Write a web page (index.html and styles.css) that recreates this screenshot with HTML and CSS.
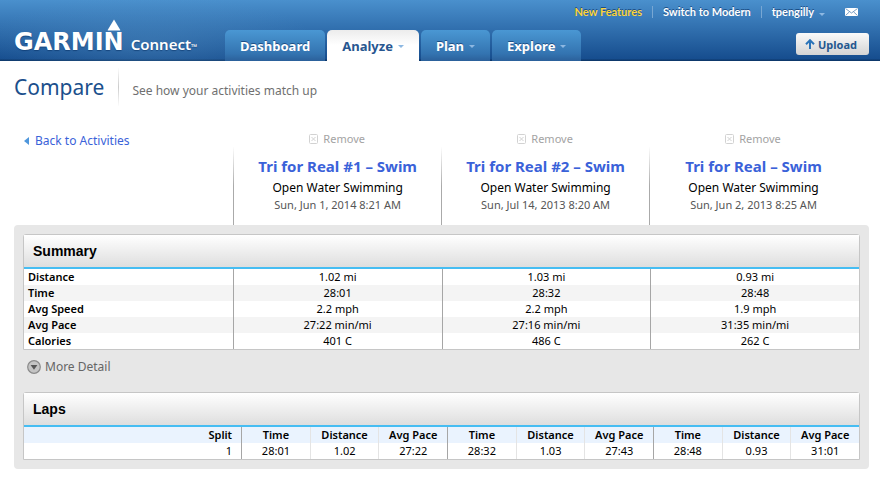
FILE: index.html
```html
<!DOCTYPE html>
<html lang="en">
<head>
    <meta charset="UTF-8">
    <meta name="viewport" content="width=device-width, initial-scale=1.0">
    <title>Garmin Connect - Compare</title>
    <link rel="stylesheet" href="styles.css">
</head>
<body>
    <header class="header">
        <a class="logo" href="#">
            <span class="logo-garmin">GARMI<span class="logo-n">N<svg class="logo-delta" viewBox="0 0 14 12"><path d="M7 0.5 L13.3 11 Q13.3 11.5 12.8 11.5 H1.2 Q0.7 11.5 0.7 11 Z" fill="#fff"/></svg></span></span>
            <span class="logo-connect">Connect<span class="logo-tm">™</span></span>
        </a>

        <nav class="tabs">
            <a class="tab" href="#">Dashboard</a>
            <a class="tab active" href="#">Analyze<span class="caret"></span></a>
            <a class="tab" href="#">Plan<span class="caret"></span></a>
            <a class="tab" href="#">Explore<span class="caret"></span></a>
        </nav>

        <div class="account">
            <div class="account-links">
                <a class="new-features" href="#">New Features</a>
                <a class="divided" href="#">Switch to Modern</a>
                <a class="divided" href="#">tpengilly<span class="caret"></span></a>
                <a class="mail" href="#" aria-label="Messages">
                    <svg viewBox="0 0 13 8" width="13" height="8">
                        <rect width="13" height="8" fill="#fff"/>
                        <path d="M0.5 0.5 L6.5 5 L12.5 0.5 M0.5 7.5 L4.5 3.8 M12.5 7.5 L8.5 3.8" fill="none" stroke="#6b93bd" stroke-width="0.9"/>
                    </svg>
                </a>
            </div>
            <button class="upload" type="button">
                <svg viewBox="0 0 10 10" width="10" height="10">
                    <path d="M5 10 V2 M1 5.2 L5 1.2 L9 5.2" fill="none" stroke="#2a73b8" stroke-width="2"/>
                </svg>
                Upload
            </button>
        </div>
    </header>

    <div class="page-title">
        <h1>Compare</h1>
        <p>See how your activities match up</p>
    </div>

    <!-- Compared activities -->
    <div class="activities">
        <a class="back" href="#">Back to Activities</a>
        <div class="activity">
            <button class="remove" type="button"><svg viewBox="0 0 9 10" width="9" height="10"><rect x="0.5" y="0.5" width="8" height="9" rx="1" fill="none" stroke="#d2d2d2"/><path d="M2.5 3 L6.5 7 M6.5 3 L2.5 7" stroke="#d2d2d2"/></svg>Remove</button>
            <div class="activity-info">
                <h2><a href="#">Tri for Real #1 – Swim</a></h2>
                <div class="type">Open Water Swimming</div>
                <div class="date">Sun, Jun 1, 2014 8:21 AM</div>
            </div>
        </div>
        <div class="activity">
            <button class="remove" type="button"><svg viewBox="0 0 9 10" width="9" height="10"><rect x="0.5" y="0.5" width="8" height="9" rx="1" fill="none" stroke="#d2d2d2"/><path d="M2.5 3 L6.5 7 M6.5 3 L2.5 7" stroke="#d2d2d2"/></svg>Remove</button>
            <div class="activity-info">
                <h2><a href="#">Tri for Real #2 – Swim</a></h2>
                <div class="type">Open Water Swimming</div>
                <div class="date">Sun, Jul 14, 2013 8:20 AM</div>
            </div>
        </div>
        <div class="activity">
            <button class="remove" type="button"><svg viewBox="0 0 9 10" width="9" height="10"><rect x="0.5" y="0.5" width="8" height="9" rx="1" fill="none" stroke="#d2d2d2"/><path d="M2.5 3 L6.5 7 M6.5 3 L2.5 7" stroke="#d2d2d2"/></svg>Remove</button>
            <div class="activity-info">
                <h2><a href="#">Tri for Real – Swim</a></h2>
                <div class="type">Open Water Swimming</div>
                <div class="date">Sun, Jun 2, 2013 8:25 AM</div>
            </div>
        </div>
    </div>

    <main class="panel">
        <section class="box">
            <h3>Summary</h3>
            <table class="summary">
                <tr><th scope="row">Distance</th><td>1.02 mi</td><td>1.03 mi</td><td>0.93 mi</td></tr>
                <tr><th scope="row">Time</th><td>28:01</td><td>28:32</td><td>28:48</td></tr>
                <tr><th scope="row">Avg Speed</th><td>2.2 mph</td><td>2.2 mph</td><td>1.9 mph</td></tr>
                <tr><th scope="row">Avg Pace</th><td>27:22 min/mi</td><td>27:16 min/mi</td><td>31:35 min/mi</td></tr>
                <tr><th scope="row">Calories</th><td>401 C</td><td>486 C</td><td>262 C</td></tr>
            </table>
        </section>

        <button class="more" type="button">
            <svg viewBox="0 0 14 14" width="14" height="14">
                <circle cx="7" cy="7" r="6.3" fill="#c4c4c4" stroke="#8a8a8a" stroke-width="1.2"/>
                <path d="M3.6 5 H10.4 L7 9.8 Z" fill="#555"/>
            </svg>
            More Detail
        </button>

        <section class="box">
            <h3>Laps</h3>
            <table class="laps">
                <thead>
                    <tr>
                        <th class="split">Split</th>
                        <th class="first">Time</th><th>Distance</th><th>Avg Pace</th>
                        <th class="first">Time</th><th>Distance</th><th>Avg Pace</th>
                        <th class="first">Time</th><th>Distance</th><th>Avg Pace</th>
                    </tr>
                </thead>
                <tbody>
                    <tr>
                        <td class="split">1</td>
                        <td class="first">28:01</td><td>1.02</td><td>27:22</td>
                        <td class="first">28:32</td><td>1.03</td><td>27:43</td>
                        <td class="first">28:48</td><td>0.93</td><td>31:01</td>
                    </tr>
                </tbody>
            </table>
        </section>
    </main>
</body>
</html>
```

FILE: styles.css
```css
* {
    box-sizing: border-box;
}

body {
    font-family: "Lucida Grande", "Noto Sans", sans-serif;
    font-size: 12px;
    line-height: 16px;
    margin: 0;
    background-color: #fff;
    color: #000;
}

h1, h2, h3, p {
    margin: 0;
}

a {
    color: #3a62d9;
    text-decoration: none;
}

button {
    font-family: inherit;
    border: none;
    padding: 0;
    background: none;
    cursor: pointer;
}

/* Header */
.header {
    display: flex;
    align-items: flex-end;
    height: 61px;
    padding: 0 11px 0 14px;
    background: radial-gradient(ellipse 170px 50px at 150px 45px, rgba(90, 150, 200, 0.35), transparent),
        linear-gradient(#4a90cd, #164d8e 59px, #0d386b 60px);
}

.logo {
    display: flex;
    flex: none;
    align-items: baseline;
    gap: 7px;
    width: 211px;
    padding-bottom: 5px;
    color: #fff;
    text-shadow: 0 1px 1px rgba(0, 40, 90, 0.5);
}

.logo-garmin {
    font-family: "DejaVu Sans", sans-serif;
    font-size: 24px;
    font-weight: bold;
    line-height: 28px;
}

.logo-n {
    position: relative;
}

.logo-delta {
    position: absolute;
    left: 3px;
    top: -9px;
    width: 14px;
    height: 12px;
}

.logo-connect {
    font-size: 15px;
    font-weight: 600;
}

.logo-tm {
    font-size: 8px;
}

.tabs {
    display: flex;
    flex: none;
    gap: 2px;
}

.tab {
    display: flex;
    align-items: center;
    height: 31px;
    padding: 0 15px;
    border-radius: 5px 5px 0 0;
    background: linear-gradient(#4a97d3, #3373b0 24px, #2b609a);
    color: #fff;
    font-size: 13px;
    font-weight: bold;
    text-shadow: 0 -1px 0 #1c4f86;
}

.tab.active {
    background: linear-gradient(#ececec, #fff 15px);
    color: #27568f;
    text-shadow: none;
}

.caret {
    display: inline-block;
    margin: 2px 0 0 5px;
    border: 3px solid transparent;
    border-top-color: #8db8e2;
    border-bottom: none;
    vertical-align: middle;
}

/* links may run left above the tabs on narrow windows */
.account {
    display: flex;
    flex: 1;
    flex-direction: column;
    align-items: flex-end;
    gap: 14px;
    min-width: 0;
    padding-bottom: 6px;
    white-space: nowrap;
}

.account-links {
    display: flex;
    align-items: center;
    height: 14px;
    padding-right: 11px;
    font-family: Lato, sans-serif;
    font-size: 11px;
}

.account-links a {
    color: #fff;
    font-weight: bold;
    line-height: 12px;
    text-shadow: 0 -1px 0 #1c4f86;
}

.account-links .new-features {
    color: #fcd53c;
}

.account-links .divided {
    margin-left: 10px;
    padding-left: 10px;
    border-left: 1px solid #78a7d3;
}

.account-links .mail {
    display: flex;
    margin-left: 20px;
}

.upload {
    display: flex;
    align-items: center;
    gap: 3px;
    height: 22px;
    padding: 0 12px 0 9px;
    border-radius: 3px;
    background: linear-gradient(#fafafa, #d4d4d4);
    color: #25588f;
    font-size: 11px;
    font-weight: bold;
}

/* Page title */
.page-title {
    display: flex;
    align-items: center;
    height: 52px;
    padding: 0 14px;
}

.page-title h1 {
    color: #1b4f8c;
    font-size: 21px;
    font-weight: normal;
    line-height: 38px;
    padding-right: 14px;
    border-right: 1px solid;
    border-image: linear-gradient(#fff, #ccc, #fff) 1;
}

.page-title p {
    padding: 7px 0 0 13px;
    color: #707070;
}

/* Activities */
.activities {
    display: grid;
    grid-template-columns: 26% 1fr 1fr 1fr;
    padding: 18px 23px 0 14px;
}

.back {
    display: flex;
    align-items: center;
    align-self: start;
    gap: 6px;
    padding-left: 10px;
    line-height: 20px;
}

.back::before {
    content: "";
    border: 4px solid transparent;
    border-right: 5px solid #4f97dc;
    border-left: none;
}

.activity {
    text-align: center;
}

.remove {
    display: flex;
    align-items: center;
    gap: 5px;
    margin: 0 auto;
    color: #a3a3a3;
    font-size: 11px;
    line-height: 16px;
}

.activity-info {
    height: 78px;
    padding-top: 8px;
    border-left: 1px solid;
    border-image: linear-gradient(#fff, #aaa 50%) 1;
}

.activity-info h2 {
    font-size: 15px;
    line-height: 22px;
}

.type {
    line-height: 22px;
}

.date {
    color: #555;
    font-size: 11px;
    line-height: 12px;
}

/* Comparison panel */
.panel {
    margin: 0 11px 21px 14px;
    padding: 9px;
    border-radius: 4px;
    background: #e7e7e7;
}

.box {
    border: 1px solid #c6c6c6;
    border-radius: 3px 3px 0 0;
    background: #fff;
}

.box h3 {
    padding: 0 9px;
    border-bottom: 2px solid #46bdf2;
    background: linear-gradient(#fff, #dedede);
    font-family: "Liberation Sans", Arial, sans-serif;
    font-size: 14px;
    line-height: 32px;
}

table {
    width: 100%;
    border-collapse: separate;
    border-spacing: 0;
    table-layout: fixed;
    font-size: 11px;
    line-height: 16px;
}

th, td {
    padding: 0;
    text-align: center;
}

th {
    font-weight: 600;
}

.summary th {
    padding-left: 4px;
    text-align: left;
}

.summary td {
    border-left: 1px solid #a6a6a6;
}

.summary tr:nth-child(even) {
    background: #f4f4f4;
}

.laps thead {
    background: #eaf3fe;
}

.laps th, .laps td {
    border-left: 1px solid #e4e4e4;
}

.laps .first {
    border-left-color: #a6a6a6;
}

.laps .split {
    width: 26%;
    padding-right: 9px;
    border-left: none;
    text-align: right;
}

.more {
    display: flex;
    align-items: center;
    gap: 4px;
    margin: 8px 4px 17px;
    color: #666;
    font-size: 12px;
    line-height: 17px;
}
```
